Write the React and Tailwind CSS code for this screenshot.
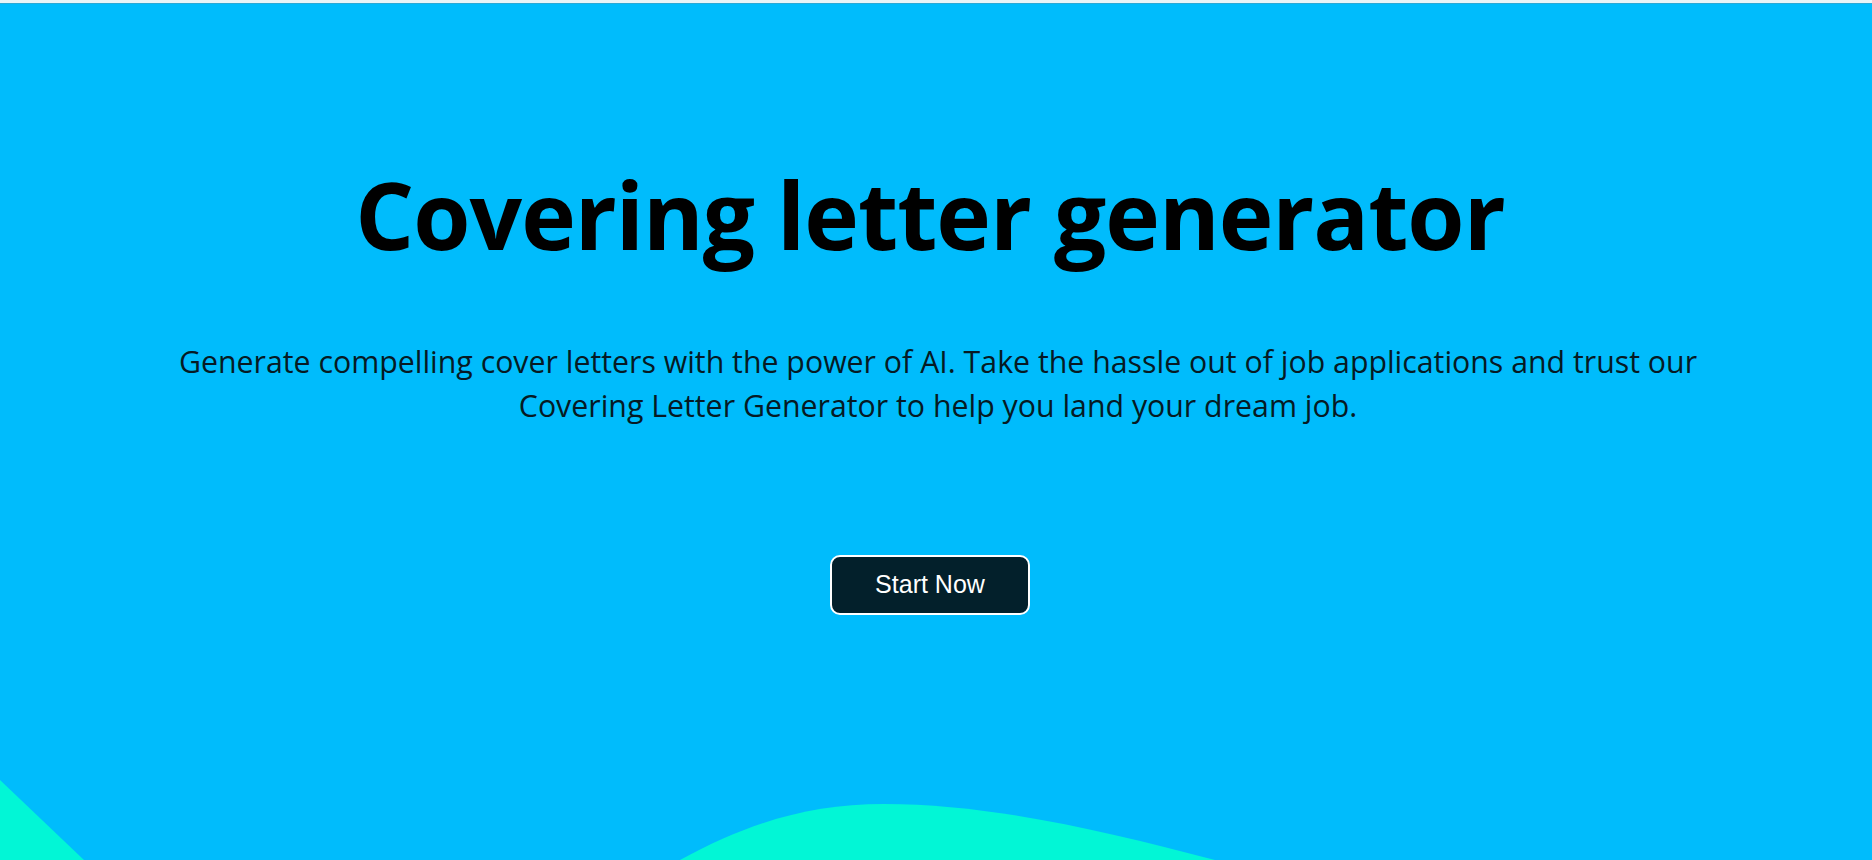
// Landing hero for the covering letter generator
function Waves() {
  return (
    <svg
      className="absolute bottom-0 left-0 h-[86px] w-full"
      viewBox="0 0 1872 86"
      preserveAspectRatio="none"
    >
      <path d="M0 6 L84 86 L0 86 Z" fill="#02f6d6" />
      <path
        d="M680 86 C750 48 810 30 884 30 C990 30 1100 56 1215 86 Z"
        fill="#02f6d6"
      />
    </svg>
  );
}

export default function App() {
  return (
    <div className="relative flex h-[860px] flex-col overflow-hidden bg-[#00bcfc] font-['Open_Sans','Noto_Sans',sans-serif]">
      <div className="h-[4px] w-full border-b border-[#2aa9d6] bg-[#eaf4f7]"></div>

      <main className="flex flex-col items-center text-center">
        <h1 className="mt-[155px] mr-[12px] text-[92.5px] font-bold leading-[1.2] tracking-[-1px] text-black">
          Covering letter generator
        </h1>

        <p className="mt-[70px] max-w-[1600px] pl-[18px] pr-[14px] text-[30.3px] leading-[44px] text-[#061a24]">
          Generate compelling cover letters with the power of AI. Take the hassle out of job
          applications and trust our Covering Letter Generator to help you land your dream job.
        </p>

        <button className="mt-[127px] mr-[12px] flex h-[60px] w-[200px] items-center justify-center rounded-[10px] border-2 border-white bg-[#03202b] font-['Liberation_Sans',Arial,sans-serif] text-[25px] text-white">
          Start Now
        </button>
      </main>

      <Waves />
    </div>
  );
}
